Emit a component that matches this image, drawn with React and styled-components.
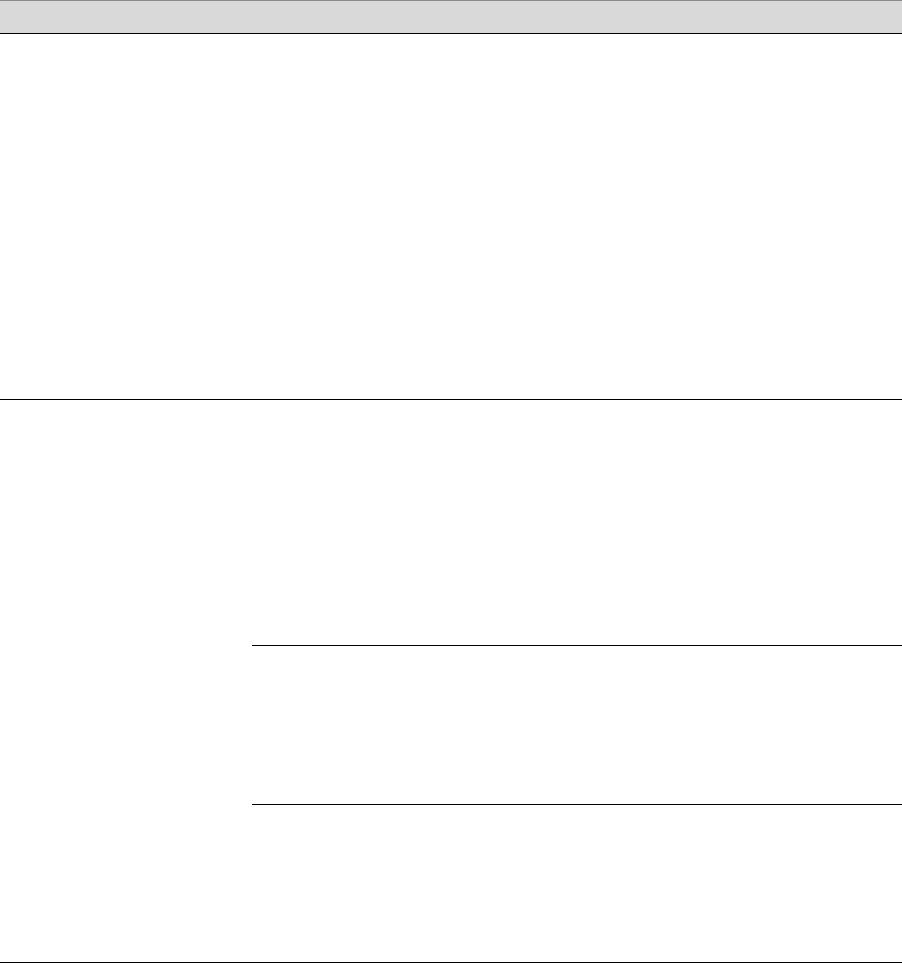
import styled, { createGlobalStyle } from 'styled-components'

const GlobalStyle = createGlobalStyle`
  html, body {
    margin: 0;
    padding: 0;
    background: #ffffff;
    font-family: "Liberation Sans", Arial, sans-serif;
  }
`;

const Table = styled.div`
  width: 902px;
  display: flex;
  flex-direction: column;
`;

const HeaderBar = styled.div`
  height: 32px;
  background: #d9d9d9;
  border-top: 1px solid #8c8c8c;
  border-bottom: 1px solid #000;
`;

const Block = styled.div`
  height: ${props => props.h}px;
  border-bottom: 1px solid #000;
`;

const SplitBlock = styled.div`
  display: grid;
  grid-template-columns: 252px 1fr;
  border-bottom: 1px solid #000;
`;

const LabelCell = styled.div``;

const SubRows = styled.div`
  display: flex;
  flex-direction: column;
`;

const SubRow = styled.div`
  height: ${props => props.h}px;
  border-bottom: ${props => props.last ? 'none' : '1px solid #000'};
`;

export default function App() {
  return (
    <>
      <GlobalStyle />
      <Table>
        <HeaderBar />
        <Block h={365} />
        <SplitBlock>
          <LabelCell />
          <SubRows>
            <SubRow h={245} />
            <SubRow h={158} />
            <SubRow h={157} last />
          </SubRows>
        </SplitBlock>
      </Table>
    </>
  )
}
